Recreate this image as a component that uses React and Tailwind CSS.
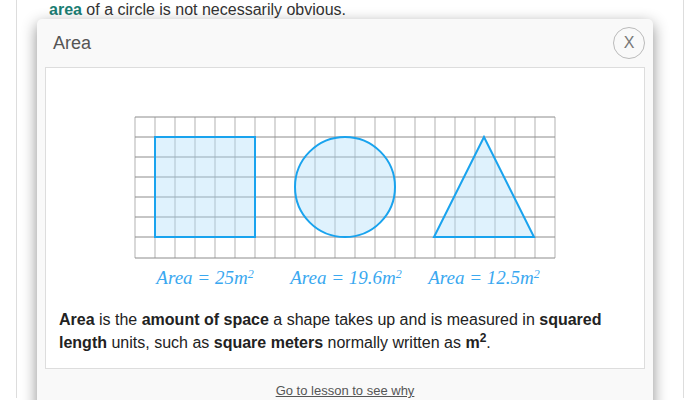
export default function App() {
  const vLines = Array.from({ length: 22 }, (_, i) => 1 + i * 20);
  const hLines = Array.from({ length: 8 }, (_, j) => 7 + j * 20);
  return (
    <div className="relative w-[700px] h-[400px] overflow-hidden bg-white font-['Liberation_Sans',Arial,sans-serif]">
      <div className="mx-4 h-full border-x border-[#ddd] px-8">
        <p className="mt-[-2px] text-[16px] leading-[24px] text-[#333]">
          <span className="font-bold text-[#1b7d73]">area</span> of a circle is not necessarily obvious.
        </p>
      </div>

      <div className="absolute left-[37px] top-[19px] w-[616px] h-[430px] rounded-[5px] bg-[#f9f9f9] shadow-[0_5px_15px_rgba(0,0,0,0.45)]">
        <div className="flex h-[48px] items-center justify-between pl-4 pr-2">
          <span className="text-[18px] text-[#555]">Area</span>
          <div className="flex h-[32px] w-[32px] items-center justify-center rounded-full border border-[#bbb] text-[16px] text-[#777]">
            X
          </div>
        </div>
        <div className="mx-2 border border-[#ddd] bg-white pt-[42px] pb-[14px]">
          <div className="flex justify-center">
            <svg width="422" height="180" viewBox="0 0 422 180">
              {vLines.map((x) => (
                <line key={"v" + x} x1={x} y1={7} x2={x} y2={148} stroke="#c4c4c4" strokeWidth="1.3" />
              ))}
              {hLines.map((y) => (
                <line key={"h" + y} x1={1} y1={y === 147 ? 148 : y} x2={421} y2={y === 147 ? 148 : y} stroke="#8c8c8c" strokeWidth="1" />
              ))}
              <rect x="21" y="27" width="100" height="100" fill="rgba(170,220,250,0.38)" stroke="#19a3ee" strokeWidth="2" />
              <circle cx="211" cy="77" r="50" fill="rgba(170,220,250,0.38)" stroke="#19a3ee" strokeWidth="2" />
              <polygon points="350,27 300,127 400,127" fill="rgba(170,220,250,0.38)" stroke="#19a3ee" strokeWidth="2" strokeLinejoin="miter" />
              <g fontFamily="'Liberation Serif', 'Times New Roman', serif" fontStyle="italic" fontSize="19" fill="#3aa8f0">
                <text x="71" y="174" textAnchor="middle">
                  Area = 25m<tspan fontSize="12" dy="-6">2</tspan>
                </text>
                <text x="212" y="174" textAnchor="middle">
                  Area = 19.6m<tspan fontSize="12" dy="-6">2</tspan>
                </text>
                <text x="350" y="174" textAnchor="middle">
                  Area = 12.5m<tspan fontSize="12" dy="-6">2</tspan>
                </text>
              </g>
            </svg>
          </div>
          <p className="mt-[18px] px-[13px] text-[16px] leading-[23px] text-[#222]">
            <b>Area</b> is the <b>amount of space</b> a shape takes up and is measured in <b>squared length</b> units, such as{" "}
            <b>square meters</b> normally written as <b>m<sup>2</sup></b>.
          </p>
        </div>
        <div className="mt-[14px] text-center text-[13px] leading-[16px] text-[#555]">
          <span className="underline">Go to lesson to see why</span>
        </div>
      </div>
    </div>
  );
}
